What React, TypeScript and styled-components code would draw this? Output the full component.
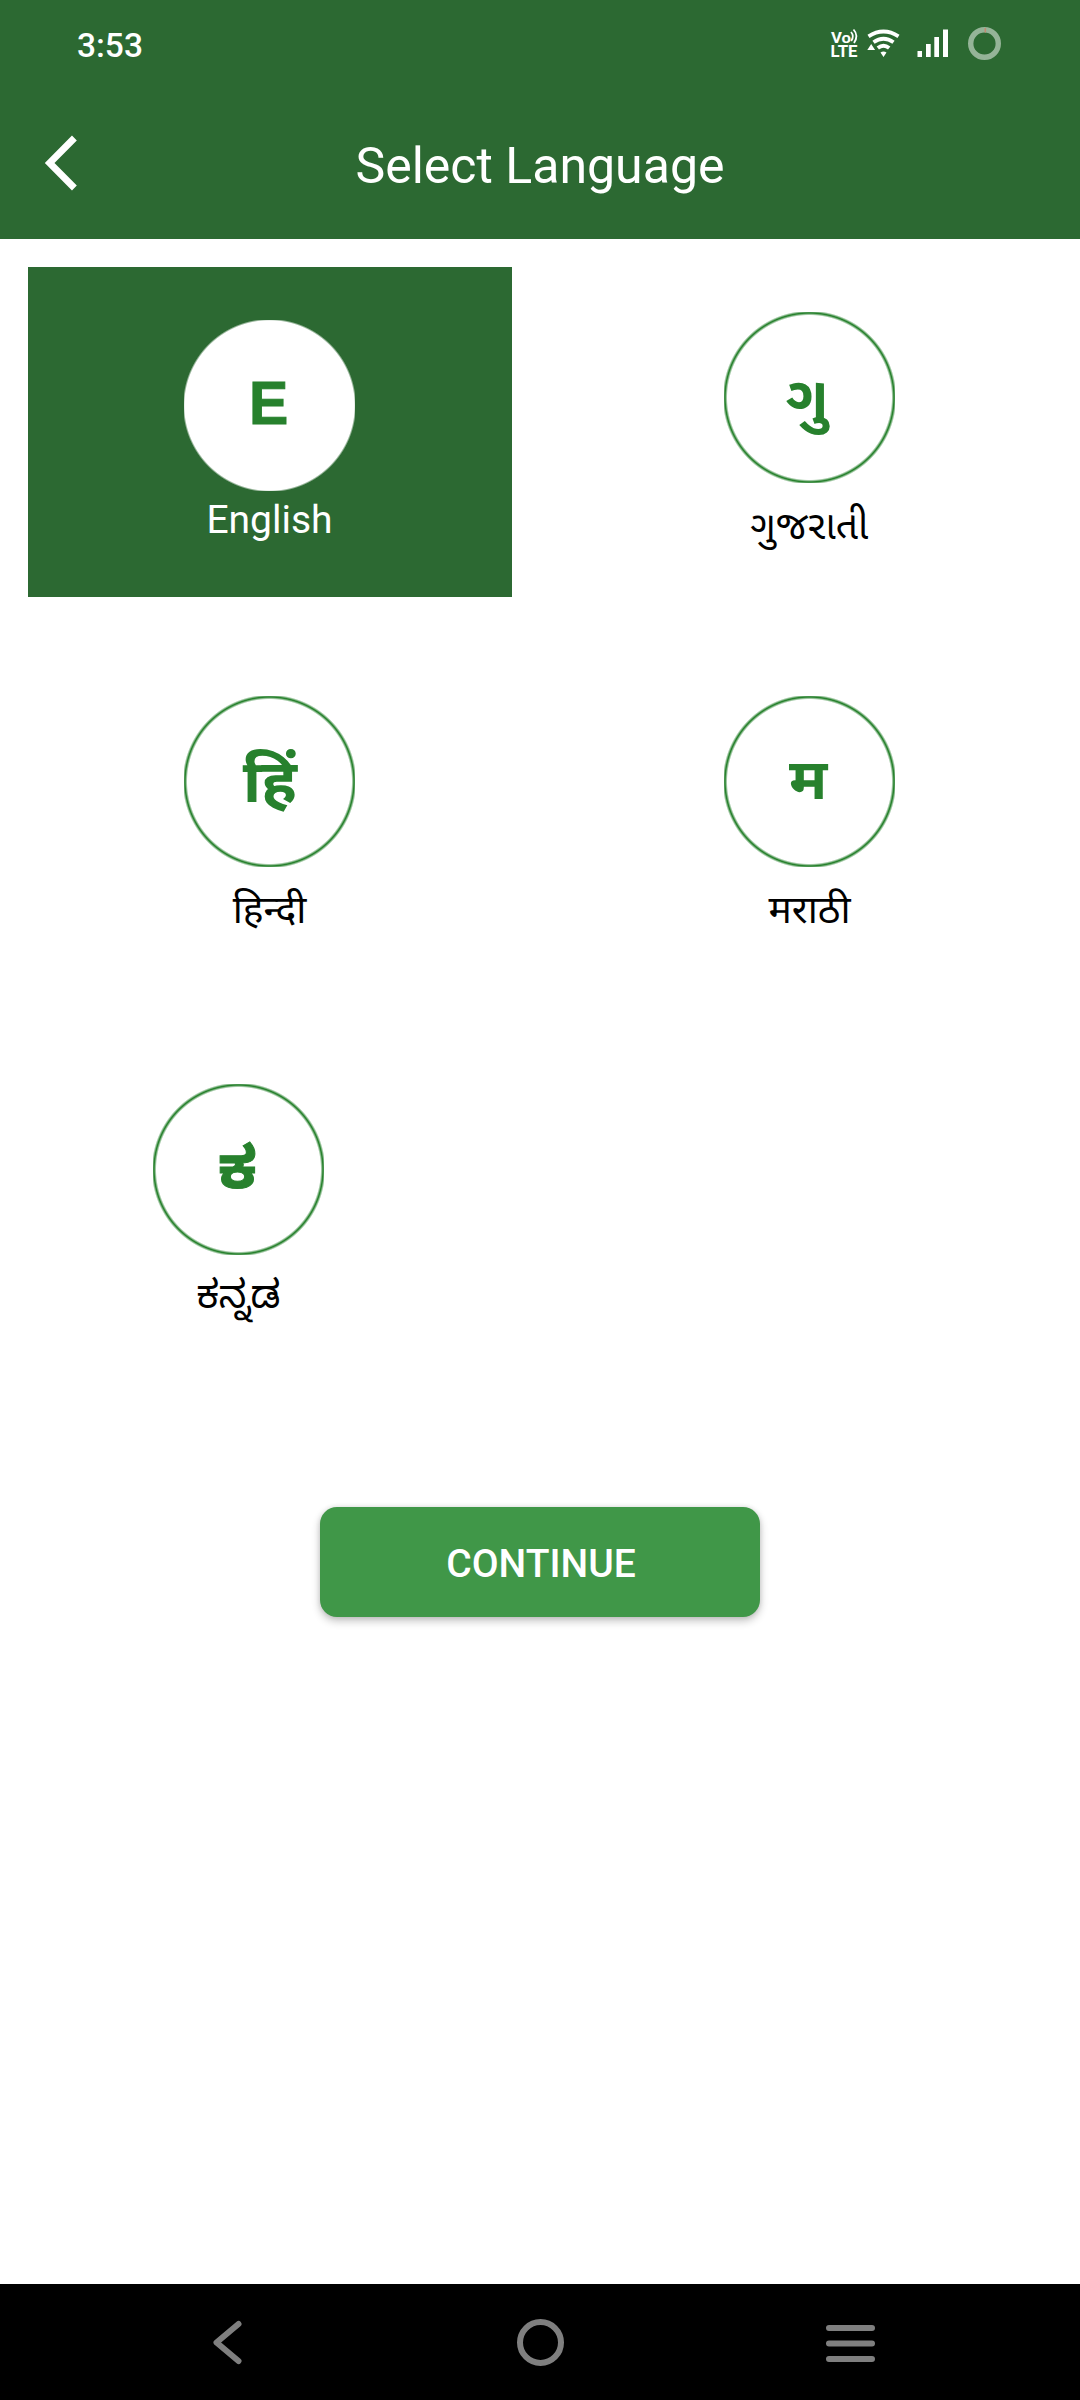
import React from 'react';
import styled, { createGlobalStyle } from 'styled-components';

const GREEN = '#2c6932';
const INK = '#27812d';

const GlobalStyle = createGlobalStyle`
  * { box-sizing: border-box; }
  body { margin: 0; background: #fff; font-family: Roboto, "Noto Sans", "Noto Sans Gujarati", "Noto Sans Kannada", sans-serif; }
`;

const Screen = styled.div`
  display: flex;
  flex-direction: column;
  width: 1080px;
  height: 2400px;
  background: #fff;
  overflow: hidden;
`;

const Header = styled.header`
  height: 239px;
  flex: none;
  background: ${GREEN};
  color: #fff;
`;

const StatusBar = styled.div`
  display: flex;
  justify-content: space-between;
  height: 86px;
  padding: 0 76px 0 77px;
`;

const Clock = styled.span`
  font-size: 33.5px;
  font-weight: 500;
  line-height: 40px;
  padding-top: 26px;
`;

const StatusIcons = styled.svg`
  display: block;
  width: 176px;
  height: 86px;
  flex: none;
`;

const TitleBar = styled.div`
  display: grid;
  grid-template-columns: 120px 1fr 120px;
  align-items: center;
  height: 153px;
`;

const BackButton = styled.button`
  border: 0;
  padding: 0 0 0 40px;
  background: none;
  height: 153px;
  svg { display: block; }
`;

const Title = styled.h1`
  margin: 0;
  font-size: 50px;
  font-weight: 400;
  line-height: 60px;
  text-align: center;
  padding-top: 6px;
`;

const Grid = styled.main`
  display: grid;
  grid-template-columns: 484px 484px;
  grid-template-rows: 330px 330px 330px;
  column-gap: 56px;
  row-gap: 55px;
  padding: 28px 28px 0;
`;

const Card = styled.div<{ $selected?: boolean; $top: number; $shift?: number }>`
  display: flex;
  flex-direction: column;
  align-items: center;
  padding-top: ${p => p.$top}px;
  padding-right: ${p => (p.$shift ?? 0) + 1}px;
  background: ${p => (p.$selected ? GREEN : 'transparent')};
  color: ${p => (p.$selected ? '#fff' : '#000')};
`;

const Badge = styled.div<{ $filled?: boolean }>`
  display: flex;
  align-items: center;
  justify-content: center;
  flex: none;
  width: 171px;
  height: 171px;
  background: ${p =>
    p.$filled
      ? 'radial-gradient(circle at center, #fff 84.8px, transparent 86.8px)'
      : `radial-gradient(circle at center, transparent 82px, ${INK} 84.3px, ${INK} 84.7px, transparent 87px)`};
`;

const Glyph = styled.span<{ $size: number; $dx: number; $dy: number; $sx: number; $stroke: number }>`
  color: ${INK};
  font-family: "Liberation Sans", "Noto Sans", "Noto Sans Gujarati", "Noto Sans Kannada", sans-serif;
  font-size: ${p => p.$size}px;
  font-weight: 700;
  line-height: 80px;
  white-space: nowrap;
  -webkit-text-stroke: ${p => p.$stroke}px ${INK};
  transform: translate(${p => p.$dx}px, ${p => p.$dy}px) scaleX(${p => p.$sx});
`;

const Label = styled.span<{ $gap: number }>`
  margin-top: ${p => p.$gap}px;
  font-size: 39px;
  line-height: 50px;
  white-space: nowrap;
`;

const Actions = styled.div`
  display: flex;
  justify-content: center;
  padding-top: 140px;
`;

const ContinueButton = styled.button`
  width: 440px;
  height: 110px;
  border: 0;
  border-radius: 17px;
  padding: 3px 0 0 2px;
  background: #409748;
  color: #fff;
  font: 500 39px/46px Roboto, sans-serif;
  box-shadow: 0 4px 8px rgba(0, 0, 0, 0.24), 0 0 5px rgba(0, 0, 0, 0.1);
`;

const NavBar = styled.nav`
  display: flex;
  justify-content: space-between;
  align-items: center;
  height: 116px;
  margin-top: auto;
  padding: 0 200px;
  background: #000;
  svg { display: block; fill: none; stroke: #7f7f7f; }
`;

type Language = {
  name: string; glyph: string; selected?: boolean; top: number; shift?: number;
  gap: number; size: number; dy: number; dx: number; sx: number; stroke: number;
};

const languages: Language[] = [
  { name: 'English', glyph: 'E', selected: true, top: 53, gap: 4, size: 62, dy: -3, dx: -1, sx: 0.95, stroke: 1 },
  { name: 'ગુજરાતી', glyph: 'ગુ', top: 45, gap: 18, size: 60, dy: 1, dx: -2, sx: 1, stroke: 0 },
  { name: 'हिन्दी', glyph: 'हिं', top: 44, gap: 18, size: 60, dy: 0, dx: 0, sx: 1.05, stroke: 0 },
  { name: 'मराठी', glyph: 'म', top: 44, gap: 18, size: 56, dy: -2, dx: -1, sx: 1.05, stroke: 0 },
  { name: 'ಕನ್ನಡ', glyph: 'ಕ', top: 47, shift: 62, gap: 15, size: 58, dy: -2, dx: -1, sx: 1.05, stroke: 1 },
];

export default function App() {
  return (
    <Screen>
      <GlobalStyle />
      <Header>
        <StatusBar>
          <Clock>3:53</Clock>
          <StatusIcons viewBox="828 0 176 86" fill="none" stroke="#fff">
            <g fill="#fff" stroke="none" fontFamily="Roboto, sans-serif" fontWeight="700">
              <text x="831" y="42.5" fontSize="15.5" textLength="20" lengthAdjust="spacingAndGlyphs">Vo</text>
              <text x="830.5" y="57" fontSize="16" textLength="27" lengthAdjust="spacingAndGlyphs">LTE</text>
            </g>
            <path d="M851 32q3.600 4 .2 9M853.500 29.500q5.500 6 .5 13.500" strokeWidth="1.8" />
            <path d="M868.500 36.300q15-9.600 30 0M873.500 42.300q10-7 20 0M877.800 48q5.700-4.500 11.400 0" strokeWidth="3.8" />
            <path d="M880.500 52.500q3-1.800 6 0l-3 4.500zM867.300 50l3.900-6 3.900 6z" fill="#fff" stroke="none" />
            <path d="M917.500 51h4.500v6h-4.500zM926 44h4.700v13h-4.700zM934.300 37h4.700v20h-4.700zM943 29.500h5v27.500h-5z" fill="#fff" stroke="none" />
            <circle cx="984.500" cy="43.500" r="13.800" stroke="#95b498" strokeWidth="5.400" />
            <path d="M985.300 28v4.500" stroke="#c58a70" strokeWidth="1.500" />
          </StatusIcons>
        </StatusBar>
        <TitleBar>
          <BackButton aria-label="Back">
            <svg width="44" height="153" viewBox="40 86 44 153" fill="none" stroke="#fff" strokeWidth="6.8">
              <path d="M74.400 138L49.600 163l24.800 25" />
            </svg>
          </BackButton>
          <Title>Select Language</Title>
        </TitleBar>
      </Header>
      <Grid>
        {languages.map(l => (
          <Card key={l.name} $selected={l.selected} $top={l.top} $shift={l.shift}>
            <Badge $filled={l.selected}>
              <Glyph $size={l.size} $dx={l.dx} $dy={l.dy} $sx={l.sx} $stroke={l.stroke}>{l.glyph}</Glyph>
            </Badge>
            <Label $gap={l.gap}>{l.name}</Label>
          </Card>
        ))}
      </Grid>
      <Actions>
        <ContinueButton>CONTINUE</ContinueButton>
      </Actions>
      <NavBar>
        <svg width="60" height="116" viewBox="200 2284 60 116" strokeWidth="6" strokeLinecap="round" strokeLinejoin="round">
          <path d="M238.500 2324l-22 18.500 22 18.500" />
        </svg>
        <svg width="60" height="116" viewBox="510 2284 60 116" strokeWidth="6">
          <circle cx="540.500" cy="2342.500" r="20.500" />
        </svg>
        <svg width="60" height="116" viewBox="820 2284 60 116" strokeWidth="6" strokeLinecap="round">
          <path d="M829 2328h43M829 2343.500h43M829 2359h43" />
        </svg>
      </NavBar>
    </Screen>
  );
}
